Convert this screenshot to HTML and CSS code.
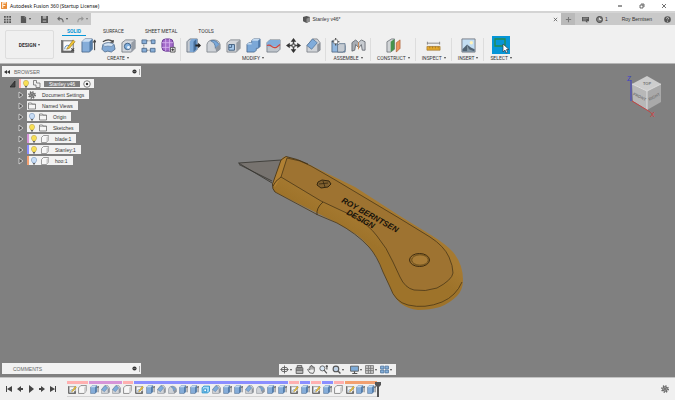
FILE: index.html
```html
<!DOCTYPE html>
<html lang="en">
<head>
<meta charset="utf-8">
<title>Autodesk Fusion 360 (Startup License)</title>
<link rel="stylesheet" href="styles.css">
</head>
<body>
<svg class="defs" aria-hidden="true">
  <defs>
    <symbol id="sketch" viewBox="0 0 16 16"><path d="M2 3h11v11H2z" fill="#fafafa" stroke="#666"/><path d="M1 2v13h13" fill="none" stroke="#555" stroke-width="1.500"/><path d="M4 12q0-5 5-4" fill="none" stroke="#5b8fc4"/><path d="M7 10l6-8 2 2-6 7-3 1z" fill="#f0c230" stroke="#806820" stroke-width=".6"/><path d="M11 11l3 3m0-3l-3 3" stroke="#444" stroke-width="1.2"/></symbol>
    <symbol id="extrude" viewBox="0 0 16 16"><path d="M1 4l3-3h8v11l-3 3H1z" fill="#85add9" stroke="#3f5c80" stroke-width=".8"/><path d="M1 4l3-3h8L9 4z" fill="#c8ddf2"/><path d="M9 4l3-3v11l-3 3z" fill="#527ba8"/><path d="M14.500 13V3m-1.500 2l1.500-3L16 5" fill="none" stroke="#333"/></symbol>
    <symbol id="revolve" viewBox="0 0 16 16"><path d="M2 7q6-4 12 0l1 5-4 3q-4-2-7 0l-3-3z" fill="#82a9d4" stroke="#486587" stroke-width=".8"/><path d="M2 7q6-4 12 0l-3 2q-4-1-7 0z" fill="#d5e5f5" stroke="#486587" stroke-width=".5"/><path d="M2 4q6-4 11 0m0-2v2.500h-3" fill="none" stroke="#444" stroke-width="1.200"/></symbol>
    <symbol id="hole" viewBox="0 0 16 16"><path d="M1 5l4-3h10v9l-4 4H1z" fill="#d2d6dc" stroke="#686d75" stroke-width=".8"/><path d="M11 5l4-3v9l-4 4z" fill="#969ca5"/><circle cx="7" cy="9" r="3.400" fill="#82b0df" stroke="#3b5c80"/><circle cx="8" cy="10" r="1.500" fill="#eaf3fc"/></symbol>
    <symbol id="pattern" viewBox="0 0 16 16"><path d="M3 3h10M3 13h9M3 4v8" stroke="#777" stroke-dasharray="2 1"/><g fill="#87aed8" stroke="#435f80" stroke-width=".8"><path d="M1 2h5v4H1zM11 2h4v4h-4zM1 11h5v4H1zM10 11h5v4h-5z"/></g></symbol>
    <symbol id="form" viewBox="0 0 16 16"><rect x="1" y="1" width="12" height="13" rx="4" fill="#a36ac9" stroke="#693993"/><path d="M5 1v13M9 1v13M1 5h12M1 10h12" stroke="#d8b4ef" stroke-width=".9"/><path d="M10 10h5v5h-5z" fill="#eee" stroke="#333" stroke-width=".8"/><path d="M11 12.500h3M12.500 11v3" stroke="#333"/></symbol>
    <symbol id="press" viewBox="0 0 16 16"><path d="M1 4l3-3h8v11l-3 3H1z" fill="#c5cad1" stroke="#596575" stroke-width=".8"/><path d="M4 4l2-3h6v11l-3 3H4z" fill="#7ca7d5"/><path d="M8 4l3-3v11l-3 3z" fill="#476f9b"/><path d="M10 7h3V5l3 3-3 3V9h-3z" fill="#222"/></symbol>
    <symbol id="fillet" viewBox="0 0 16 16"><path d="M1 14V7q1-5 7-5 6 0 7 5v5l-4 3H1z" fill="#cfd3d8" stroke="#737982" stroke-width=".8"/><path d="M5 3q5-2 9 4l-4 4Q10 5 5 3z" fill="#79a7d8" stroke="#46698f" stroke-width=".7"/><path d="M10 11l5-4v5l-4 3z" fill="#90969e"/></symbol>
    <symbol id="shell" viewBox="0 0 16 16"><path d="M1 5l4-3h10v9l-4 4H1z" fill="#d4d7db" stroke="#70757c" stroke-width=".8"/><path d="M11 5l4-3v9l-4 4z" fill="#989da4"/><path d="M3 7h6v6H3z" fill="#a9cbed" stroke="#405d7d"/><path d="M6 7v3H3" fill="none" stroke="#405d7d"/></symbol>
    <symbol id="combine" viewBox="0 0 16 16"><path d="M1 7l2-2h3V3l2-2h7v8l-2 2h-2v2l-2 2H1z" fill="#7ca8d7" stroke="#426389" stroke-width=".8"/><path d="M6 3l2-2h7l-2 2zM1 7l2-2h3v2z" fill="#c3daf1"/><path d="M13 3v8l2-2V1z" fill="#5079a8"/></symbol>
    <symbol id="split" viewBox="0 0 16 16"><path d="M1 5l3-3h11v10l-3 3H1z" fill="#bfc5cc" stroke="#68727d" stroke-width=".8"/><path d="M1 5l3-3h11v5l-3 2H1z" fill="#82aedb"/><path d="M1 8q3-1 5 1t5 1l4-3" fill="none" stroke="#d1443c" stroke-width="1.300"/></symbol>
    <symbol id="move" viewBox="0 0 16 16"><path d="M8 2v12M2 8h12" stroke="#444" stroke-width="1.500" stroke-dasharray="5 2"/><path d="M8 0l3 4H5zM8 16l3-4H5zM0 8l4-3v6zM16 8l-4-3v6z" fill="#333"/><path d="M6.500 6.500h3v3h-3z" fill="#f1f1f1" stroke="#444"/></symbol>
    <symbol id="chamfer" viewBox="0 0 16 16"><path d="M1 8l6-7h5l3 4v8l-3 2H1z" fill="#d1d4d8" stroke="#70767e" stroke-width=".8"/><path d="M1 8l6-7 5 4-6 7z" fill="#80acdb" stroke="#486b91" stroke-width=".7"/><path d="M12 7l3-2v8l-3 2z" fill="#90959c"/></symbol>
    <symbol id="component" viewBox="0 0 16 16"><path d="M1 3h6v5h8v7H1z" fill="#91b7df" stroke="#526983" stroke-width=".9"/><path d="M7 8l2-2h6v7l-2 2H7z" fill="#c5cbd2" stroke="#526983" stroke-width=".8"/><path d="M5 0v8M1 4h8" stroke="#444" stroke-width="1.200"/><path d="M3 2h4v4H3z" fill="#fff" stroke="#666" stroke-width=".6"/></symbol>
    <symbol id="joint" viewBox="0 0 16 16"><path d="M1 14V5l4-3 3 3v5l-3-3-1 6z" fill="#a8adb4" stroke="#555b63" stroke-width=".8"/><path d="M15 13V4l-4-2-3 3v6l3-4 1 6z" fill="#c8ccd1" stroke="#555b63" stroke-width=".8"/><path d="M7.500 5l1-1v7l-1 2z" fill="#d08c58"/></symbol>
    <symbol id="plane" viewBox="0 0 16 16"><path d="M1 4l5-3h3v11l-4 3H1z" fill="#d2d5d8" stroke="#646a70" stroke-width=".8"/><path d="M5 4l4-3v11l-4 3z" fill="#45934c"/><path d="M11 5l4-3v9l-4 4z" fill="#ee935e" stroke="#a85b31" stroke-width=".7"/></symbol>
    <symbol id="ruler" viewBox="0 0 16 16"><path d="M1 5.500h14M1.500 4v3M14.500 4v3" stroke="#888"/><path d="M1 9h14v4H1z" fill="#e6a92c" stroke="#9c732b" stroke-width=".7"/><path d="M4 9v2m3-2v2m3-2v2m3-2v2" stroke="#805c20" stroke-width=".6"/></symbol>
    <symbol id="picture" viewBox="0 0 16 16"><path d="M1 1h14v14H1z" fill="#c3def3" stroke="#777d85"/><circle cx="11" cy="5" r="1.800" fill="#fff3bb"/><path d="M1.500 12l5-5 4 3 4 2v2.500h-13z" fill="#526474"/><path d="M6.500 7l2 5 6 2.500h-8z" fill="#879aa8"/></symbol>
    <symbol id="select" viewBox="0 0 18 18"><path d="M0 0h18v18H0z" fill="#0696d7"/><path d="M3 3h10v7H3z" fill="none" stroke="#278b4c" stroke-width="1.300"/><path d="M11 8v8l2-2 1 3 1.500-.7-1-2.800H17z" fill="#fff" stroke="#303b44" stroke-width=".7"/></symbol>
    <symbol id="body" viewBox="0 0 16 16"><path d="M1 5l4-4h10v9l-4 5H1z" fill="#f7f7f7" stroke="#777" stroke-width="1.400" stroke-linejoin="round"/><path d="M11 5l4-4v9l-4 5z" fill="#ccc"/></symbol>
    <symbol id="folder" viewBox="0 0 16 16"><path d="M1 2h6l1 2h7v10H1z" fill="#f5f5f5" stroke="#666" stroke-width="1.500"/><path d="M1 5h14" stroke="#777"/></symbol>
    <symbol id="bulb" viewBox="0 0 16 16"><path d="M5 11Q2 8 3 4q2-4 5-3.500Q11 0 13 4q1 4-2 7v1H5z" fill="currentColor" stroke="#978338" stroke-width=".8"/><path d="M6 12h4v3H6z" fill="#666"/></symbol>
    <symbol id="bulb-off" viewBox="0 0 16 16"><path d="M5 11Q2 8 3 4q2-4 5-3.500Q11 0 13 4q1 4-2 7v1H5z" fill="#c7dcf5" stroke="#6183ad"/><path d="M6 12h4v3H6z" fill="#666"/></symbol>
    <symbol id="gear" viewBox="0 0 16 16"><circle cx="8" cy="8" r="6.500" fill="none" stroke="#555" stroke-width="2.500" stroke-dasharray="2.600 2.500"/><circle cx="8" cy="8" r="4.500" fill="#bbb" stroke="#555" stroke-width="2"/><circle cx="8" cy="8" r="1.800" fill="#555"/></symbol>
    <symbol id="dot" viewBox="0 0 6 6"><circle cx="3" cy="3" r="2.500" fill="#333"/><path d="M1.500 3h3" stroke="#999" stroke-width=".7"/></symbol>
    <symbol id="right" viewBox="0 0 6 8"><path d="M1 1l4 3-4 3z" fill="#555" stroke="#ddd" stroke-width=".8"/></symbol>
  </defs>
</svg>

<header class="titlebar">
  <svg class="logo" viewBox="0 0 7 8"><path d="M0 0h7v8H0z" fill="#e98a32"/><path d="M2 7V1h4M2 4h3" fill="none" stroke="#fff3e3" stroke-width="1.300"/></svg>
  <span class="title">Autodesk Fusion 360 (Startup License)</span>
  <button aria-label="Minimize"><svg viewBox="0 0 6 6"><path d="M1 3h4" stroke="#333"/></svg></button>
  <button aria-label="Restore"><svg viewBox="0 0 6 6"><path d="M1 2h3v3H1zM2 1h3v3" fill="none" stroke="#333" stroke-width=".7"/></svg></button>
  <button aria-label="Close"><svg viewBox="0 0 6 6"><path d="M1 1l4 4m0-4L1 5" stroke="#333" stroke-width=".7"/></svg></button>
</header>

<div class="tabbar">
  <nav class="quick">
    <button aria-label="Data panel"><svg viewBox="0 0 8 8"><path d="M0 0h2v2H0zm3 0h2v2H3zm3 0h2v2H6zM0 3h2v2H0zm3 0h2v2H3zm3 0h2v2H6zM0 6h2v2H0zm3 0h2v2H3zm3 0h2v2H6z" fill="#555"/></svg></button>
    <button class="menu" aria-label="File"><svg viewBox="0 0 8 8"><path d="M1 0h4l2 2v6H1z" fill="#555"/><path d="M5 0v2h2" stroke="#ccc" stroke-width=".5"/></svg></button>
    <button aria-label="Save"><svg viewBox="0 0 8 8"><path d="M0 0h8v8H0z" fill="#555"/><path d="M2 0h4v3H2zM2 5h4v1.500H2z" fill="#aaa"/></svg></button>
    <button class="menu" aria-label="Undo"><svg viewBox="0 0 8 8"><path d="M1 3h3q3 0 3 4M3 1L1 3l2 2" fill="none" stroke="#666" stroke-width="1.200"/></svg></button>
    <button class="menu faded" aria-label="Redo"><svg viewBox="0 0 8 8"><path d="M7 3H4Q1 3 1 7M5 1l2 2-2 2" fill="none" stroke="#777" stroke-width="1.200"/></svg></button>
  </nav>
  <div class="document">
    <span class="docname"><svg viewBox="0 0 8 8"><path d="M4 0l4 1v5L4 8 0 6V1z" fill="#555"/><path d="M4 3v5l4-2V1z" fill="#8d8d8d"/></svg>Stanley v46*</span>
    <button aria-label="Close document"><svg viewBox="0 0 6 6"><path d="M1 1l4 4m0-4L1 5" stroke="#555" stroke-width=".9"/></svg></button>
  </div>
  <div class="account">
    <button class="add" aria-label="New document"><svg viewBox="0 0 8 8"><path d="M4 1v6M1 4h6" stroke="#777" stroke-width="1.200"/></svg></button>
    <button aria-label="Notes"><svg viewBox="0 0 8 8"><path d="M0 1h8v5H6v2L4 6H0z" fill="#555"/><path d="M1 2.500h6M1 4.500h4" stroke="#bbb" stroke-width=".7"/></svg></button>
    <button class="jobs" aria-label="Job status"><svg viewBox="0 0 8 8"><circle cx="4" cy="4" r="3.300" fill="#888" stroke="#555" stroke-width="1.200"/><path d="M4 2v2h2" fill="none" stroke="#eee"/></svg>1</button>
    <button class="user">Roy Berntsen</button>
    <button aria-label="Help"><svg viewBox="0 0 8 8"><circle cx="4" cy="4" r="3.800" fill="#555"/><path d="M2.800 3q0-1.200 1.200-1.200T5.200 3Q5.200 3.500 4 4.500M4 5.500v1" fill="none" stroke="#eee" stroke-width=".8"/></svg></button>
  </div>
</div>

<div class="toolbar">
  <button class="workspace menu">DESIGN</button>
  <div class="ribbon">
    <nav class="tabs">
      <button class="active">SOLID</button><button>SURFACE</button><button>SHEET METAL</button><button>TOOLS</button>
    </nav>
    <div class="groups">
      <section>
        <div class="tools">
          <button aria-label="Sketch"><svg><use href="#sketch"/></svg></button>
          <button aria-label="Extrude"><svg><use href="#extrude"/></svg></button>
          <button aria-label="Revolve"><svg><use href="#revolve"/></svg></button>
          <button aria-label="Hole"><svg><use href="#hole"/></svg></button>
          <button aria-label="Pattern"><svg><use href="#pattern"/></svg></button>
          <button aria-label="Form"><svg><use href="#form"/></svg></button>
        </div>
        <button class="menu">CREATE</button>
      </section>
      <section>
        <div class="tools">
          <button aria-label="Press pull"><svg><use href="#press"/></svg></button>
          <button aria-label="Fillet"><svg><use href="#fillet"/></svg></button>
          <button aria-label="Shell"><svg><use href="#shell"/></svg></button>
          <button aria-label="Combine"><svg><use href="#combine"/></svg></button>
          <button aria-label="Split"><svg><use href="#split"/></svg></button>
          <button aria-label="Move"><svg><use href="#move"/></svg></button>
          <button aria-label="Chamfer"><svg><use href="#chamfer"/></svg></button>
        </div>
        <button class="menu">MODIFY</button>
      </section>
      <section>
        <div class="tools">
          <button aria-label="New component"><svg><use href="#component"/></svg></button>
          <button aria-label="Joint"><svg><use href="#joint"/></svg></button>
        </div>
        <button class="menu">ASSEMBLE</button>
      </section>
      <section class="single"><div class="tools"><button aria-label="Plane"><svg><use href="#plane"/></svg></button></div><button class="menu">CONSTRUCT</button></section>
      <section class="single"><div class="tools"><button aria-label="Measure"><svg><use href="#ruler"/></svg></button></div><button class="menu">INSPECT</button></section>
      <section class="single"><div class="tools"><button aria-label="Image"><svg><use href="#picture"/></svg></button></div><button class="menu">INSERT</button></section>
      <section class="single"><div class="tools"><button class="chosen" aria-label="Selection"><svg><use href="#select"/></svg></button></div><button class="menu">SELECT</button></section>
    </div>
  </div>
</div>

<main class="canvas">
  <svg class="model" viewBox="0 64 675 313" role="img" aria-label="Stanley utility knife">
    <defs>
      <linearGradient id="wood" gradientUnits="userSpaceOnUse" x1="345" y1="230" x2="355" y2="212"><stop offset="0" stop-color="#9e732a"/><stop offset="1" stop-color="#a67a31"/></linearGradient>
    </defs>
    <path d="M238.500 163L281 160 272 183z" fill="#77736f"/>
    <path d="M238.500 163L281 160M238.500 163L272 183M239 164.500L272 181" fill="none" stroke="#35332f" stroke-width=".8"/>
    <path d="M286 156.500Q298 159 308 164L355 187 400 216 431 235Q447 245 453 252 463 264 463 280 463 290 457 296 450 303 440 307 430 310 418 310 408 309 400 303 393 296 390 287L383 272Q379 260 373 252 366 242 357 235 348 229 337 223L275 192Q272 189 272.500 184L281 160Q283 156 286 156.500z" fill="url(#wood)"/>
    <path d="M286 156.500L281 160 272.500 184 275 187 281 177 287 158z" fill="#b18134"/>
    <path d="M287 158Q301 160 311 166L337 181 399 218 430 237Q444 246 449 257 453 266 453 273 452 280 437 288 425 292 414 290 405 288 400 277L393 262Q387 248 377 236 369 225 353 216L321 201 281 177z" fill="#9e7331" stroke="#4a3718" stroke-width=".8"/>
    <path d="M275 192L318 215 337 223Q356 233 369 247 377 256 383 272L390 287Q395 302 408 305 425 309 442 302 456 296 462 282" fill="none" stroke="#4a3718" stroke-width=".8"/>
    <path d="M286 156.500L281 160 272.500 184Q272 189 275 192M281 177Q275 181 273 186M323 202Q316 208 317 215M286 156.500Q298 159 308 164" fill="none" stroke="#3c2c12" stroke-width=".8"/>
    <path d="M318 182l4-2 7 1 2 3-3 3-7 1-4-3z" fill="#80602e" stroke="#35270f"/><path d="M319 184l9-1m-5-2l2 6" stroke="#35270f" stroke-width=".8"/>
    <ellipse cx="419.500" cy="260" rx="10" ry="6.500" fill="#997030" stroke="#3e2c10"/><ellipse cx="420" cy="260" rx="8.300" ry="5.200" fill="#a87c37" stroke="#604617" stroke-width=".8"/>
    <g class="engraving"><text transform="translate(341 202) rotate(29)">ROY BERNTSEN</text><text transform="translate(346 214) rotate(29)">DESIGN</text></g>
  </svg>

  <aside class="browser">
    <div class="panel"><svg class="collapse" viewBox="0 0 6 6"><path d="M3 1v4L0 3zM6 1v4L3 3z" fill="#333"/></svg><span>BROWSER</span><svg class="dot"><use href="#dot"/></svg><i></i></div>
    <ul class="tree">
      <li class="root"><svg class="arrow" viewBox="0 0 6 8"><path d="M5 1v6H0z" fill="#444" stroke="#222" stroke-width=".7"/></svg><div class="node pink"><svg><use href="#bulb"/></svg><svg viewBox="0 0 16 16"><path d="M1 1h6v5h7v9H6v-5H1z" fill="#eee" stroke="#666" stroke-width="1.500"/></svg><span class="current">Stanley v46</span><svg viewBox="0 0 16 16"><circle cx="8" cy="8" r="6.500" fill="#fff" stroke="#555" stroke-width="1.500"/><circle cx="8" cy="8" r="2.500" fill="#333"/></svg></div></li>
      <li><svg class="arrow"><use href="#right"/></svg><div class="node"><svg><use href="#gear"/></svg><span>Document Settings</span></div></li>
      <li><svg class="arrow"><use href="#right"/></svg><div class="node"><svg><use href="#folder"/></svg><span>Named Views</span></div></li>
      <li><svg class="arrow"><use href="#right"/></svg><div class="node"><svg><use href="#bulb-off"/></svg><svg><use href="#folder"/></svg><span>Origin</span></div></li>
      <li><svg class="arrow"><use href="#right"/></svg><div class="node"><svg><use href="#bulb"/></svg><svg><use href="#folder"/></svg><span>Sketches</span></div></li>
      <li><svg class="arrow"><use href="#right"/></svg><div class="node part purple"><svg><use href="#bulb"/></svg><svg><use href="#body"/></svg><span>blade:1</span></div></li>
      <li><svg class="arrow"><use href="#right"/></svg><div class="node part blue"><svg><use href="#bulb"/></svg><svg><use href="#body"/></svg><span>Stanley:1</span></div></li>
      <li><svg class="arrow"><use href="#right"/></svg><div class="node part orange"><svg><use href="#bulb-off"/></svg><svg><use href="#body"/></svg><span>hoo:1</span></div></li>
    </ul>
  </aside>

  <svg class="cube" viewBox="0 0 40 48" role="img" aria-label="View cube">
    <path d="M20 6l14 8-14 7-15-7z" fill="#cdcdcd"/><path d="M5 14l15 7v19L6 31z" fill="#b8b8b8"/><path d="M34 14l-14 7v19l14-8z" fill="#a9a9a9"/>
    <path d="M5 14l15 7 14-7M20 21v19" fill="none" stroke="#dedede"/>
    <path d="M4 31V10" stroke="#3c3cc8"/><path d="M5 31l15 9 3 2" fill="none" stroke="#c44343"/>
    <g class="faces"><text x="20" y="15">TOP</text><text transform="translate(12 28) rotate(25)">FRONT</text><text transform="translate(28 28) rotate(-27)">RIGHT</text></g>
    <text class="axis z" x="0" y="11">Z</text><text class="axis x" x="23" y="47">X</text>
  </svg>

  <div class="panel comments"><span>COMMENTS</span><svg class="dot"><use href="#dot"/></svg><i></i></div>

  <nav class="viewbar">
    <button class="menu" aria-label="Orbit"><svg viewBox="0 0 16 16"><path d="M8 1v14M1 8h14" stroke="#555" stroke-width="1.500"/><ellipse cx="8" cy="8" rx="6" ry="4" fill="none" stroke="#555" stroke-width="1.500"/></svg></button>
    <button aria-label="Look at"><svg viewBox="0 0 16 16"><path d="M2 5h12v10H2zM4 1h8v4H4z" fill="#bbb" stroke="#555" stroke-width="1.500"/><path d="M2 9h12" stroke="#555" stroke-width="2"/></svg></button>
    <button aria-label="Pan"><svg viewBox="0 0 16 16"><path d="M5 14L1 8l2-1 2 2V3h2V1h2v2h2v1h2v7l-2 4z" fill="#eee" stroke="#555" stroke-width="1.500"/><path d="M7 3v5m2-5v5m2-4v4" stroke="#555"/></svg></button>
    <button aria-label="Zoom"><svg viewBox="0 0 16 16"><circle cx="6" cy="6" r="4.500" fill="#d9e6f2" stroke="#555" stroke-width="1.500"/><path d="M9 9l5 6M14 8V1m-2 2l2-2 2 2" fill="none" stroke="#555" stroke-width="2"/></svg></button>
    <button class="menu" aria-label="Fit"><svg viewBox="0 0 16 16"><circle cx="7" cy="7" r="5" fill="#bfd2e6" stroke="#555" stroke-width="2"/><path d="M11 11l4 4" stroke="#555" stroke-width="2.500"/></svg></button>
    <button class="menu split" aria-label="Display"><svg viewBox="0 0 16 16"><path d="M1 2h14v9H1z" fill="#7eacd9" stroke="#555" stroke-width="1.500"/><path d="M8 11v4M4 15h9" stroke="#555" stroke-width="2"/></svg></button>
    <button class="menu" aria-label="Grid"><svg viewBox="0 0 16 16"><path d="M1 1h14v14H1zM1 6h14M1 10h14M6 1v14M10 1v14" fill="#ccc" stroke="#777" stroke-width="1.500"/></svg></button>
    <button class="menu" aria-label="Viewports"><svg viewBox="0 0 16 16"><path d="M1 2h6v5H1zM9 2h6v5H9zM1 9h6v5H1zM9 9h6v5H9z" fill="#86b1dc" stroke="#52779f" stroke-width="1.500"/></svg></button>
  </nav>
</main>

<footer class="timeline">
  <div class="player">
    <button aria-label="Start"><svg viewBox="0 0 8 8"><path d="M1 1h1v6H1zM7 1v6L2 4z" fill="#444"/></svg></button>
    <button aria-label="Back"><svg viewBox="0 0 8 8"><path d="M5 1v6L1 4zM5 3h2v2H5z" fill="#444"/></svg></button>
    <button aria-label="Play"><svg viewBox="0 0 8 8"><path d="M2 0l5 4-5 4z" fill="#444"/></svg></button>
    <button aria-label="Forward"><svg viewBox="0 0 8 8"><path d="M3 1v6l4-3zM1 3h2v2H1z" fill="#444"/></svg></button>
    <button aria-label="End"><svg viewBox="0 0 8 8"><path d="M6 1h1v6H6zM1 1v6l5-3z" fill="#444"/></svg></button>
  </div>
  <div class="track">
    <div class="pink" style="--n:2"><svg><use href="#sketch"/></svg><svg><use href="#body"/></svg></div>
    <div class="purple" style="--n:3"><svg><use href="#extrude"/></svg><svg><use href="#chamfer"/></svg><svg><use href="#chamfer"/></svg></div>
    <div class="pink" style="--n:1"><svg><use href="#body"/></svg></div>
    <div class="blue" style="--n:14"><svg><use href="#sketch"/></svg><svg><use href="#extrude"/></svg><svg><use href="#chamfer"/></svg><svg><use href="#fillet"/></svg><svg><use href="#extrude"/></svg><svg><use href="#extrude"/></svg><svg viewBox="0 0 16 16"><path d="M2 5l3-3h10v9l-3 3H2z" fill="#a9dcfa" stroke="#1687c4" stroke-width="1.500"/><path d="M5 7h5v5H5z" fill="#fff" stroke="#1687c4" stroke-width="1.500"/></svg><svg><use href="#chamfer"/></svg><svg><use href="#extrude"/></svg><svg><use href="#extrude"/></svg><svg><use href="#chamfer"/></svg><svg><use href="#fillet"/></svg><svg><use href="#extrude"/></svg><svg><use href="#extrude"/></svg></div>
    <div class="pink" style="--n:1"><svg><use href="#sketch"/></svg></div>
    <div class="blue" style="--n:1"><svg><use href="#extrude"/></svg></div>
    <div class="pink" style="--n:1"><svg><use href="#sketch"/></svg></div>
    <div class="blue" style="--n:1"><svg><use href="#extrude"/></svg></div>
    <div class="pink" style="--n:1"><svg><use href="#body"/></svg></div>
    <div class="orange" style="--n:3"><svg><use href="#sketch"/></svg><svg><use href="#extrude"/></svg><svg><use href="#extrude"/></svg></div>
  </div>
  <svg class="marker" viewBox="0 0 6 15"><path d="M0 0h6v3L4 5v10H2V5L0 3z" fill="#555"/></svg>
  <button class="settings" aria-label="Timeline settings"><svg><use href="#gear"/></svg></button>
</footer>
</body>
</html>
```
FILE: styles.css
```css
* { box-sizing: border-box; }

body {
  margin: 0;
  height: 100vh;
  display: flex;
  flex-direction: column;
  overflow: hidden;
  background: #f0f0f0;
  color: #333;
  font: 5px/6px "Liberation Sans", Arial, sans-serif;
}

button {
  display: flex;
  align-items: center;
  justify-content: center;
  padding: 0;
  border: 0;
  background: none;
  color: inherit;
  font: inherit;
  white-space: nowrap;
}

svg { display: block; flex: none; }
.defs { position: absolute; width: 0; height: 0; }

.menu::after {
  content: "";
  margin-left: 2px;
  border: 1px solid transparent;
  border-top: 2px solid #444;
  border-bottom: 0;
}

/* Title bar */
.titlebar {
  display: flex;
  align-items: center;
  height: 11px;
  padding: 0 8px 0 1px;
  background: #fff;
  color: #111;
  font: 5px/8px "Noto Sans", "Open Sans", sans-serif;
}
.logo { width: 6px; height: 7px; margin-right: 3px; }
.title { flex: 1; }
.titlebar button { margin-left: 16px; }
.titlebar button svg { width: 6px; height: 6px; }

/* Document tabs */
.tabbar {
  display: flex;
  height: 14px;
  border-top: 2px solid #d4d4d4;
}
.tabbar svg { width: 7px; height: 7px; }
.quick, .account {
  display: flex;
  align-items: center;
  background: #c9c9c9;
}
.quick { width: 91px; padding: 0 3px 0 4px; justify-content: space-between; }
.faded { opacity: .6; }
.document { flex: 1; display: flex; align-items: center; padding-right: 3px; }
.docname { flex: 1; display: flex; align-items: center; justify-content: center; gap: 2px; }
.document button svg { width: 5px; height: 5px; }
.account { width: 114px; padding-right: 4px; justify-content: space-between; }
.add { width: 14px; height: 12px; background: #bababa; }
.jobs { gap: 2px; }
.user { padding: 0 5px 0 7px; }

/* Ribbon */
.toolbar {
  display: flex;
  height: 39px;
  padding: 2px 0 0 5px;
  border-bottom: 1px solid #b5b5b5;
  font-family: Roboto, sans-serif;
}
.workspace {
  width: 49px;
  height: 29px;
  margin: 3px 4px 0 0;
  border: 1px solid #ddd;
  border-radius: 2px;
  font-weight: bold;
}
.ribbon { flex: 1; }
.tabs { display: flex; gap: 13px; padding-left: 4px; height: 9px; }
.tabs button { padding: 0 4px; border-bottom: 1px solid transparent; }
.tabs .active { color: #0696d7; font-weight: bold; border-color: #0696d7; padding: 0 5px; }
.groups { display: flex; }
.groups section {
  display: flex;
  flex-direction: column;
  align-items: center;
  height: 26px;
  padding: 0 3px 0 2px;
  position: relative;
}
.groups section:first-child { padding-left: 0; }
.groups .single { padding: 0 2px; }
.groups section:not(:last-child)::after {
  content: "";
  position: absolute;
  right: 0;
  top: 2px;
  bottom: 1px;
  width: 1px;
  background: #ddd;
}
.tools { display: flex; height: 18px; }
.tools button { width: 20px; }
.tools svg { width: 15px; height: 15px; }
.tools .chosen svg { width: 18px; height: 18px; }
.groups section > .menu { height: 8px; padding: 0 4px; }

/* Workspace */
.canvas { flex: 1; position: relative; min-height: 0; background: #808080; }
.model { position: absolute; inset: 0; width: 100%; height: 100%; }
.engraving { font: italic bold 8px "Liberation Sans", Arial, sans-serif; fill: #17120a; }
.browser { position: absolute; left: 2px; top: 2px; width: 139px; }
.panel {
  display: flex;
  align-items: center;
  height: 11px;
  padding: 0 1px 0 2px;
  background: #f2f2f2;
  color: #666;
}
.panel span { flex: 1; }
.panel i { width: 1px; height: 6px; margin-left: 2px; background: #aaa; }
.collapse { width: 6px; height: 6px; margin-right: 4px; }
.dot { width: 5px; height: 5px; }
.comments { position: absolute; left: 2px; bottom: 3px; width: 139px; padding-left: 11px; }

.tree { list-style: none; margin: 2px 0 0; padding: 0 0 0 16px; display: grid; gap: 2px; }
.tree li { display: flex; align-items: center; gap: 3px; height: 9px; }
.tree .root { margin-left: -8px; }
.arrow { width: 6px; height: 8px; }
.node {
  display: flex;
  align-items: center;
  gap: 3px;
  height: 9px;
  padding: 0 5px 0 1px;
  background: #f2f2f2;
}
.node svg { width: 8px; height: 8px; color: #f8df55; }
.node span { padding-left: 3px; }
.part { border-left: 2px solid; }
.pink { border-color: #ffb0b0; }
.purple { border-color: #d694d8; }
.blue { border-color: #8a8eff; }
.orange { border-color: #f2a070; }
.node.pink { border-left: 2px solid #ffb0b0; padding: 0 3px 0 1px; }
.node .current { padding: 0 5px; background: #7d7d7d; color: #fff; }

.cube { position: absolute; right: 8px; top: 6px; width: 40px; height: 48px; }
.faces { font: bold 4px "Liberation Sans", sans-serif; fill: #777; text-anchor: middle; }
.axis { font: 7px "Liberation Sans", sans-serif; }
.z { fill: #3c3cc8; }
.x { fill: #d33; }

.viewbar {
  position: absolute;
  left: 0;
  right: 0;
  bottom: 2px;
  width: 117px;
  height: 11px;
  margin: 0 auto;
  padding: 0 4px 0 1px;
  display: flex;
  align-items: center;
  justify-content: space-between;
  background: #f0f0f0;
}
.viewbar svg { width: 9px; height: 9px; }
.viewbar .menu::after { margin-left: 1px; }
.viewbar .split { margin-left: 3px; }

/* Timeline */
.timeline {
  display: flex;
  align-items: center;
  height: 23px;
  padding-right: 6px;
  border-top: 1px solid #c4c4c4;
}
.player { display: flex; gap: 3px; padding: 0 10px 0 5px; }
.player svg { width: 8px; height: 8px; }
.track {
  display: grid;
  grid-template-columns: repeat(28, 1fr);
  width: 311px;
  height: 16px;
  border-bottom: 1px solid #d2d2d2;
}
.track div {
  grid-column: span var(--n);
  display: flex;
  justify-content: space-around;
  margin: 0 1px 0 0;
  padding-top: 1px;
  border-top-width: 3px;
  border-top-style: solid;
}
.track svg { width: 9px; height: 9px; }
.marker { width: 6px; height: 15px; margin-left: -3px; }
.settings { margin-left: auto; }
.settings svg { width: 8px; height: 8px; }
```
